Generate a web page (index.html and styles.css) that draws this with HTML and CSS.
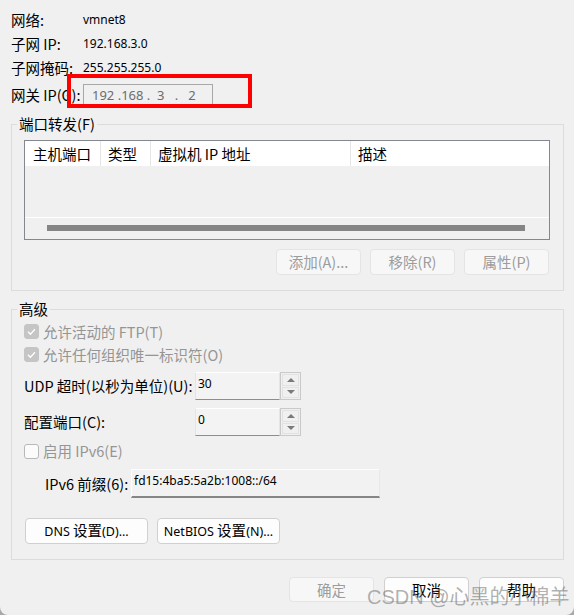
FILE: index.html
```html
<!DOCTYPE html>
<html lang="zh-CN">
<head>
<meta charset="utf-8">
<title>NAT 设置</title>
<link rel="stylesheet" href="styles.css">
</head>
<body>
<div class="window">
  <div class="info">
    <span class="lbl">网络:</span><span class="val">vmnet8</span>
    <span class="lbl">子网 IP:</span><span class="val">192.168.3.0</span>
    <span class="lbl">子网掩码:</span><span class="val">255.255.255.0</span>
    <span class="lbl">网关 IP(G):</span><div class="ip-field">192 .168 .  3   .   2</div>
  </div>
  <div class="annot"></div>

  <fieldset class="group">
    <legend>端口转发(F)</legend>
    <div class="ports">
      <div class="ports-head">
        <div class="col c1">主机端口</div>
        <div class="col c2">类型</div>
        <div class="col c3">虚拟机 IP 地址</div>
        <div class="col c4">描述</div>
      </div>
      <div class="ports-body"></div>
      <div class="hscroll"><div class="thumb"></div></div>
    </div>
    <div class="btn-row">
      <button class="btn" disabled>添加(A)...</button>
      <button class="btn" disabled>移除(R)</button>
      <button class="btn" disabled>属性(P)</button>
    </div>
  </fieldset>

  <fieldset class="group adv">
    <legend>高级</legend>
    <label class="check disabled">
      <span class="box checked"><svg viewBox="0 0 15 15" width="15" height="15"><path d="M4 7.8l2.4 2.4 4.6-5" fill="none" stroke="#fff" stroke-width="1.3"/></svg></span>
      <span>允许活动的 FTP(T)</span>
    </label>
    <label class="check disabled">
      <span class="box checked"><svg viewBox="0 0 15 15" width="15" height="15"><path d="M4 7.8l2.4 2.4 4.6-5" fill="none" stroke="#fff" stroke-width="1.3"/></svg></span>
      <span>允许任何组织唯一标识符(O)</span>
    </label>
    <div class="spin-row first">
      <span class="spin-lbl">UDP 超时(以秒为单位)(U):</span>
      <div class="spin">
        <div class="spin-field">30</div>
        <div class="spin-btns"><div class="sb"><span class="up"></span></div><div class="sb"><span class="down"></span></div></div>
      </div>
    </div>
    <div class="spin-row">
      <span class="spin-lbl">配置端口(C):</span>
      <div class="spin">
        <div class="spin-field">0</div>
        <div class="spin-btns"><div class="sb"><span class="up"></span></div><div class="sb"><span class="down"></span></div></div>
      </div>
    </div>
    <label class="check disabled ipv6">
      <span class="box"></span>
      <span>启用 IPv6(E)</span>
    </label>
    <div class="prefix-row">
      <span class="prefix-lbl">IPv6 前缀(6):</span>
      <div class="text-field">fd15:4ba5:5a2b:1008::/64</div>
    </div>
    <div class="btn-row left">
      <button class="btn wide"><span class="en">DNS</span> 设置<span class="en">(D)...</span></button>
      <button class="btn wide"><span class="en">NetBIOS</span> 设置<span class="en">(N)...</span></button>
    </div>
  </fieldset>

  <div class="footer">
    <button class="btn" disabled>确定</button>
    <button class="btn">取消</button>
    <button class="btn">帮助</button>
  </div>
  <div class="watermark">CSDN @心黑的小棉羊</div>
</div>
</body>
</html>
```
FILE: styles.css
```css
html { background: #a9a9a9; }
body { margin: 0; }

.window {
  position: relative;
  width: 574px;
  height: 615px;
  box-sizing: border-box;
  padding: 0 10px 0 11px;
  background: #f0f0f0;
  border-radius: 0 0 8px 8px;
  font-family: "Noto Sans CJK SC", sans-serif;
  font-size: 14.5px;
  line-height: 20px;
  color: #000;
  overflow: hidden;
}

.info {
  display: grid;
  grid-template-columns: 72px auto;
  grid-template-rows: 24px 24px 24px 30px;
  align-items: center;
  padding-top: 8px;
}
.lbl { white-space: nowrap; }
.val {
  font-family: "Noto Sans", sans-serif;
  font-size: 12px;
}
.ip-field {
  width: 130px;
  height: 23px;
  box-sizing: border-box;
  border: 1px solid #a8a8a8;
  background: #f0f0f0;
  padding-left: 8px;
  font-family: "Noto Sans", sans-serif;
  font-size: 13px;
  line-height: 21px;
  color: #6d6d6d;
  white-space: pre;
}

.annot {
  position: absolute;
  left: 67px;
  top: 74px;
  width: 185px;
  height: 34px;
  box-sizing: border-box;
  border: 4px solid #ff0000;
}

.group {
  margin: 4px 0 0;
  padding: 6px 13px 15px 12px;
  border: 1px solid #dcdcdc;
  min-width: 0;
}
.group legend {
  padding: 0 2px;
  margin-left: -7px;
  line-height: 20px;
  font-size: 14.5px;
}
.group.adv { margin-top: 8px; padding-top: 1px; }

.ports {
  height: 100px;
  box-sizing: border-box;
  border: 1px solid #828790;
  display: flex;
  flex-direction: column;
}
.ports-head {
  height: 25px;
  background: #fff;
  display: grid;
  grid-template-columns: 76px 50px 200px 1fr;
}
.col {
  border-right: 1px solid #e5e5e5;
  padding-left: 7px;
  line-height: 25px;
  white-space: nowrap;
}
.col.c1 { padding-left: 8px; }
.col.c4 { border-right: none; }
.ports-body { height: 51px; border-bottom: 1px solid #fff; }
.hscroll { flex: 1; padding: 7px 24px 0 22px; }
.thumb { height: 6px; background: #858585; }

.btn-row {
  display: flex;
  justify-content: flex-end;
  gap: 9px;
  margin: 9px 1px 0 0;
}
.btn-row.left { justify-content: flex-start; margin: 20px 0 0 1px; }

.btn {
  width: 85px;
  height: 26px;
  box-sizing: border-box;
  border: 1px solid #d0d0d0;
  border-radius: 4px;
  background: #fdfdfd;
  font-family: inherit;
  font-size: 14.5px;
  line-height: 20px;
  color: #000;
  padding: 0;
  white-space: nowrap;
}
.btn:disabled {
  background: #f7f7f7;
  border-color: #e4e4e4;
  color: #9c9c9c;
}
.btn.wide { width: 123px; }
.en {
  font-family: "Noto Sans", sans-serif;
  font-size: 12.5px;
}

.check {
  display: flex;
  align-items: center;
  gap: 4px;
  height: 23px;
}
.check.disabled { color: #959595; }
.check.ipv6 { height: 22px; margin-top: 4px; }
.box {
  width: 15px;
  height: 15px;
  box-sizing: border-box;
  border-radius: 3px;
  border: 1px solid #b8b8b8;
  background: #fbfbfb;
  display: block;
}
.box.checked { background: #c5c5c5; border-color: #c5c5c5; }
.box svg { display: block; margin: -1px; }

.spin-row {
  display: flex;
  align-items: center;
  margin-top: 8px;
}
.spin-row.first { margin-top: 6px; }
.spin-lbl { width: 171px; white-space: nowrap; }
.spin {
  display: flex;
  width: 106px;
  height: 28px;
}
.spin-field {
  flex: 1;
  box-sizing: border-box;
  border: 1px solid #e4e4e4;
  border-top-color: #fff;
  border-bottom-color: #8d8d8d;
  background: #f3f3f3;
  padding: 3px 0 0 2px;
  font-family: "Noto Sans", sans-serif;
  font-size: 12px;
  line-height: 16px;
}
.spin-btns {
  width: 21px;
  box-sizing: border-box;
  border: 1px solid #c9c9c9;
  display: flex;
  flex-direction: column;
  padding: 1px;
  gap: 1px;
}
.sb {
  flex: 1;
  border: 1px solid #e2e2e2;
  background: #f0f0f0;
  display: flex;
  align-items: center;
  justify-content: center;
}
.up {
  width: 0; height: 0;
  border-left: 4px solid transparent;
  border-right: 4px solid transparent;
  border-bottom: 4px solid #7a7a7a;
}
.down {
  width: 0; height: 0;
  border-left: 4px solid transparent;
  border-right: 4px solid transparent;
  border-top: 4px solid #7a7a7a;
}

.prefix-row {
  display: flex;
  align-items: center;
  margin-top: 7px;
  padding-left: 21px;
}
.prefix-lbl { width: 86px; white-space: nowrap; }
.text-field {
  width: 249px;
  height: 29px;
  box-sizing: border-box;
  border: 1px solid #fdfdfd;
  border-right-color: #e8e8e8;
  border-bottom: 2px solid #868686;
  background: #f2f2f2;
  padding: 3px 0 0 2px;
  font-family: "Noto Sans", sans-serif;
  font-size: 12px;
  line-height: 16px;
}

.footer {
  display: flex;
  justify-content: flex-end;
  gap: 10px;
  margin-top: 17px;
}
.footer .btn { height: 25px; }

.watermark {
  position: absolute;
  left: 367px;
  top: 584px;
  font-family: "Liberation Sans", "Noto Sans CJK SC", sans-serif;
  font-size: 20px;
  line-height: 26px;
  color: rgba(110, 110, 110, 0.55);
  white-space: nowrap;
  pointer-events: none;
}
```
